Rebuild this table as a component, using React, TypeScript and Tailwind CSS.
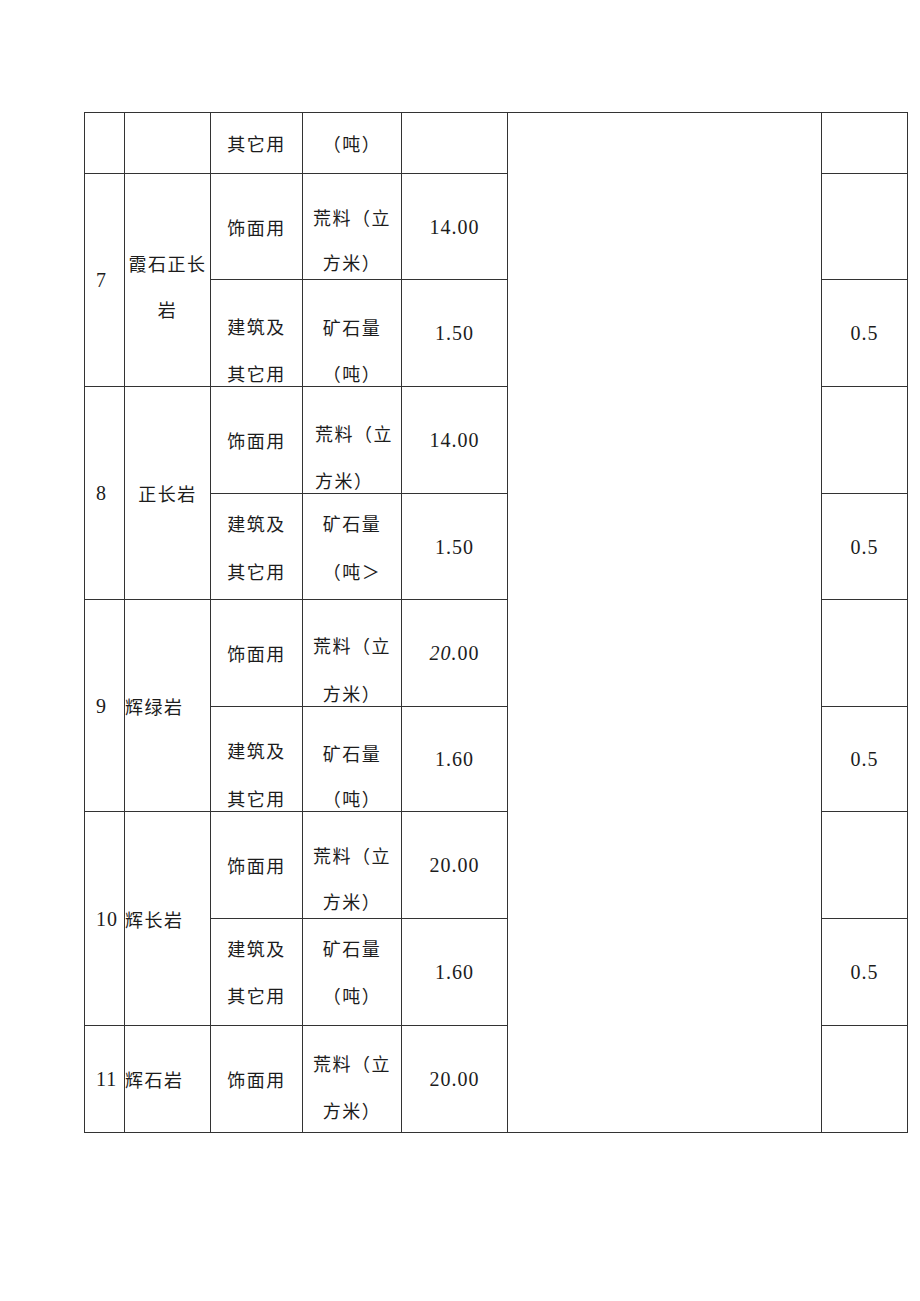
import React from 'react';

// cell text styles
const cjk = "font-['Noto_Sans_CJK_SC',sans-serif] text-[18px] tracking-[1.5px] leading-[24px]";
const num = "font-['Liberation_Serif','Noto_Sans_CJK_SC',serif] text-[20px] tracking-[1px] leading-[24px]";

const center = 'flex items-center justify-center';

function Cell({ children, className = '' }: { children?: React.ReactNode; className?: string }) {
  return <div className={`bg-white ${className}`}>{children}</div>;
}

// two stacked lines, placed from the top of the cell
function TwoLines({ first, second, className }: { first: string; second: string; className: string }) {
  return (
    <Cell className={`flex flex-col ${cjk} ${className}`}>
      <span>{first}</span>
      <span>{second}</span>
    </Cell>
  );
}

function Value({ children }: { children: React.ReactNode }) {
  return <Cell className={`${center} ${num}`}>{children}</Cell>;
}

function Usage({ children }: { children: React.ReactNode }) {
  return <Cell className={`${center} ${cjk}`}>{children}</Cell>;
}

function RowNo({ n }: { n: string }) {
  return <Cell className={`row-span-2 flex items-center pl-[11px] ${num}`}>{n}</Cell>;
}

export default function App() {
  return (
    <div className="min-h-[1301px] bg-white pl-[84px] pt-[112px] text-[#1c1c1c]">
      <div className="grid w-[824px] grid-cols-[39px_85px_91px_98px_105px_313px_85px] grid-rows-[60px_105px_106px_106px_105px_106px_104px_106px_106px_106px] gap-px border border-[#333] bg-[#333]">
        {/* carried-over row */}
        <Cell />
        <Cell />
        <Usage>其它用</Usage>
        <Usage>（吨）</Usage>
        <Cell />
        <Cell className="row-span-10" />
        <Cell />

        {/* 7 */}
        <RowNo n="7" />
        <Cell className={`row-span-2 flex flex-col items-center gap-[22px] pt-[77px] ${cjk}`}>
          <span>霞石正长</span>
          <span>岩</span>
        </Cell>
        <Usage>饰面用</Usage>
        <TwoLines first="荒料（立" second="方米）" className="items-center gap-[21px] pt-[31px]" />
        <Value>14.00</Value>
        <Cell />

        <TwoLines first="建筑及" second="其它用" className="items-center gap-[23px] pt-[34px]" />
        <TwoLines first="矿石量" second="（吨）" className="items-center gap-[22px] pt-[35px]" />
        <Value>1.50</Value>
        <Value>0.5</Value>

        {/* 8 */}
        <RowNo n="8" />
        <Cell className={`row-span-2 ${center} ${cjk}`}>正长岩</Cell>
        <Usage>饰面用</Usage>
        <TwoLines first="荒料（立" second="方米）" className="items-start gap-[23px] pl-[12px] pt-[34px]" />
        <Value>14.00</Value>
        <Cell />

        <TwoLines first="建筑及" second="其它用" className="items-center gap-[24px] pt-[17px]" />
        <TwoLines first="矿石量" second="（吨＞" className="items-center gap-[24px] pt-[17px]" />
        <Value>1.50</Value>
        <Value>0.5</Value>

        {/* 9 */}
        <RowNo n="9" />
        <Cell className={`row-span-2 flex items-center ${cjk}`}>辉绿岩</Cell>
        <Usage>饰面用</Usage>
        <TwoLines first="荒料（立" second="方米）" className="items-center gap-[24px] pt-[33px]" />
        <Value>
          <i>20.</i>00
        </Value>
        <Cell />

        <TwoLines first="建筑及" second="其它用" className="items-center gap-[24px] pt-[31px]" />
        <TwoLines first="矿石量" second="（吨）" className="items-center gap-[21px] pt-[34px]" />
        <Value>1.60</Value>
        <Value>0.5</Value>

        {/* 10 */}
        <RowNo n="10" />
        <Cell className={`row-span-2 flex items-center ${cjk}`}>辉长岩</Cell>
        <Usage>饰面用</Usage>
        <TwoLines first="荒料（立" second="方米）" className="items-center gap-[22px] pt-[31px]" />
        <Value>20.00</Value>
        <Cell />

        <TwoLines first="建筑及" second="其它用" className="items-center gap-[23px] pt-[17px]" />
        <TwoLines first="矿石量" second="（吨）" className="items-center gap-[23px] pt-[17px]" />
        <Value>1.60</Value>
        <Value>0.5</Value>

        {/* 11 */}
        <Cell className={`flex items-center pl-[11px] ${num}`}>11</Cell>
        <Cell className={`flex items-center ${cjk}`}>辉石岩</Cell>
        <Usage>饰面用</Usage>
        <TwoLines first="荒料（立" second="方米）" className="items-center gap-[23px] pt-[25px]" />
        <Value>20.00</Value>
        <Cell />
      </div>
    </div>
  );
}
